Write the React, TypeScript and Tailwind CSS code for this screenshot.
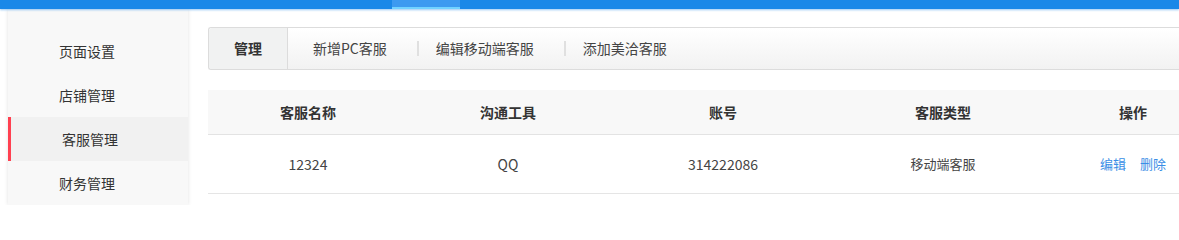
const menu = ["页面设置", "店铺管理", "客服管理", "财务管理"];
const tabs = ["新增PC客服", "编辑移动端客服", "添加美洽客服"];
const cols = [
  { title: "客服名称", w: "w-[200px]" },
  { title: "沟通工具", w: "w-[200px]" },
  { title: "账号", w: "w-[230px]" },
  { title: "客服类型", w: "w-[210px]" },
  { title: "操作", w: "w-[170px]" },
];

export default function App() {
  return (
    <div className="h-[205px] w-[1179px] overflow-hidden bg-white font-['Noto_Sans_CJK_SC','Microsoft_YaHei',sans-serif] text-[#333]">
      <div className="relative h-[9px] bg-[#1a88e8] shadow-[0_1px_2px_rgba(26,136,232,0.45)]">
        <div className="absolute left-[392px] top-0 h-[9px] w-[68px] border-b-[2px] border-[#72d2ff] bg-[#3d9af0]" />
      </div>
      <div className="flex">
        <aside className="ml-[8px] h-[196px] w-[180px] shrink-0 bg-[#f8f8f8] pt-[20px] shadow-[0_0_4px_rgba(0,0,0,0.12)]">
          {menu.map((m, i) => (
            <div
              key={m}
              className={
                i === 2
                  ? "flex h-[44px] items-center border-l-[3px] border-[#ff4050] bg-[#f1f1f1] pl-[51px] text-[14px]"
                  : "flex h-[44px] items-center pl-[51px] text-[14px]"
              }
            >
              {m}
            </div>
          ))}
        </aside>
        <main className="ml-[20px] flex-1 pt-[18px]">
          <div className="flex h-[43px] items-center rounded-l-[3px] border border-r-0 border-[#dcdcdc] bg-gradient-to-b from-white to-[#f2f2f2] text-[14px]">
            <div className="flex h-full w-[79px] items-center justify-center rounded-l-[3px] border-r border-[#dcdcdc] bg-[#f1f2f2] font-bold text-[#333]">
              管理
            </div>
            {tabs.map((t, i) => (
              <div key={t} className="flex items-center">
                <span className={i === 0 ? "ml-[25px] text-[#444]" : "ml-[17px] text-[#444]"}>{t}</span>
                {i < tabs.length - 1 && <span className="ml-[30px] h-[15px] w-[2px] bg-[#e0e0e0]" />}
              </div>
            ))}
          </div>
          <div className="mt-[20px] rounded-t-[3px]">
            <div className="flex h-[45px] items-center border-b border-[#e3e3e3] bg-[#f8f8f8] text-[14px] font-bold text-[#333]">
              {cols.map((c) => (
                <div key={c.title} className={`${c.w} shrink-0 text-center`}>
                  {c.title}
                </div>
              ))}
            </div>
            <div className="flex h-[59px] items-center border-b border-[#e5e5e5] text-[13px] text-[#444]">
              <div className="w-[200px] shrink-0 text-center text-[14px]">12324</div>
              <div className="w-[200px] shrink-0 text-center text-[14px]">QQ</div>
              <div className="w-[230px] shrink-0 text-center text-[14px]">314222086</div>
              <div className="w-[210px] shrink-0 text-center">移动端客服</div>
              <div className="flex w-[170px] shrink-0 justify-center gap-[14px] text-[#3a8ee6]">
                <span>编辑</span>
                <span>删除</span>
              </div>
            </div>
          </div>
        </main>
      </div>
    </div>
  );
}
